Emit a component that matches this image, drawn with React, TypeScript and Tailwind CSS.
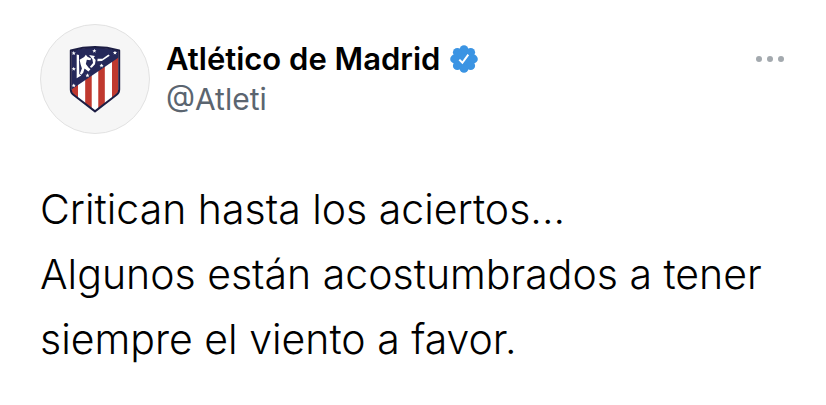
import React from "react";

type Tweet = { name: string; handle: string; lines: string[] };

const tweet: Tweet = {
  name: "Atlético de Madrid",
  handle: "@Atleti",
  lines: ["Critican hasta los aciertos...", "Algunos están acostumbrados a tener siempre el viento a favor."],
};

const stars = [
  [115, 104],
  [178, 97],
  [241, 103],
  [115, 152],
  [115, 203],
  [157, 172],
  [200, 142],
];

function Crest() {
  return (
    <svg viewBox="15 18 330 330" className="size-full" role="img" aria-label="Escudo">
      <defs>
        <clipPath id="shield">
          <path d="M108 97Q180 77 252 97V215Q252 224 244 231L180 280L116 231Q108 224 108 215Z" />
        </clipPath>
      </defs>
      <g clipPath="url(#shield)">
        <path fill="#fff" d="M100 80h160v210H100z" />
        <path fill="#c0392f" d="M108 80h20v210h-20zM150 80h20v210h-20zM190 80h20v210h-20zM232 80h22v210h-22z" />
        <path fill="#25285a" d="M100 75h160v37L100 220z" />
        <path fill="#fff" d="M124 108L131 110L132 168L138 172L124 181Z" />
        <path fill="#fff" d="M133 124L147 116L152 109L157 115L168 120L166 126L155 124L152 137L160 148L166 153L160 160L148 151L144 164L138 170L134 166L140 151L136 138Z" />
        <path fill="#fff" d="M162 110L180 113L176 118L182 125L180 138L170 149L164 146L174 134L172 123ZM188 121L203 121L221 108L225 112L201 128L187 129Z" />
      </g>
      <path
        d="M106 96Q180 75 254 96V215Q254 225 246 231L180 282L114 231Q106 225 106 215Z"
        fill="none"
        stroke="#1c1d43"
        strokeWidth="6"
        strokeLinejoin="round"
      />
      {stars.map(([x, y]) => (
        <path
          key={`${x}-${y}`}
          transform={`translate(${x} ${y})`}
          fill="#fff"
          d="M0-6.5L1.8-2.2L6.3-2L2.8 1L4 5.5L0 3L-4 5.5L-2.8 1L-6.3-2L-1.8-2.2Z"
        />
      ))}
    </svg>
  );
}

function Verified() {
  return (
    <svg viewBox="0 0 28 28" className="size-7 shrink-0" role="img" aria-label="Cuenta verificada">
      <g fill="#3b94e3">
        <circle cx="14" cy="14" r="11" />
        <circle cx="14" cy="4.6" r="4.4" />
        <circle cx="20.7" cy="7.3" r="4.4" />
        <circle cx="23.4" cy="14" r="4.4" />
        <circle cx="20.7" cy="20.7" r="4.4" />
        <circle cx="14" cy="23.4" r="4.4" />
        <circle cx="7.3" cy="20.7" r="4.4" />
        <circle cx="4.6" cy="14" r="4.4" />
        <circle cx="7.3" cy="7.3" r="4.4" />
      </g>
      <path d="M9.3 14.6L12.4 17.8L18.3 9.6" fill="none" stroke="#fff" strokeWidth="2" />
    </svg>
  );
}

export default function App() {
  return (
    <article className="min-h-screen bg-white px-10 pt-6 font-['Inter',sans-serif] text-black">
      <header className="flex items-start">
        <div className="size-[110px] shrink-0 overflow-hidden rounded-full border border-[#e2e2e2] bg-[#f6f6f6]">
          <Crest />
        </div>
        <div className="ml-4 flex-1 pt-[15px]">
          <div className="flex items-center gap-[10px]">
            <h1 className="text-[31px] leading-10 font-semibold">{tweet.name}</h1>
            <Verified />
          </div>
          <a href="#perfil" className="block text-[30px] leading-10 text-[#5b6570]">
            {tweet.handle}
          </a>
        </div>
        <button type="button" aria-label="Más opciones" className="mt-[23px] mr-px flex h-6 items-center">
          <svg viewBox="0 0 30 8" className="h-2 w-[30px]" fill="#a3a9ae">
            <circle cx="4" cy="4" r="3" />
            <circle cx="15" cy="4" r="3" />
            <circle cx="26" cy="4" r="3" />
          </svg>
        </button>
      </header>
      <div className="mt-[43px] text-[41px] leading-[65px] font-light">
        {tweet.lines.map((line) => (
          <p key={line}>{line}</p>
        ))}
      </div>
    </article>
  );
}
